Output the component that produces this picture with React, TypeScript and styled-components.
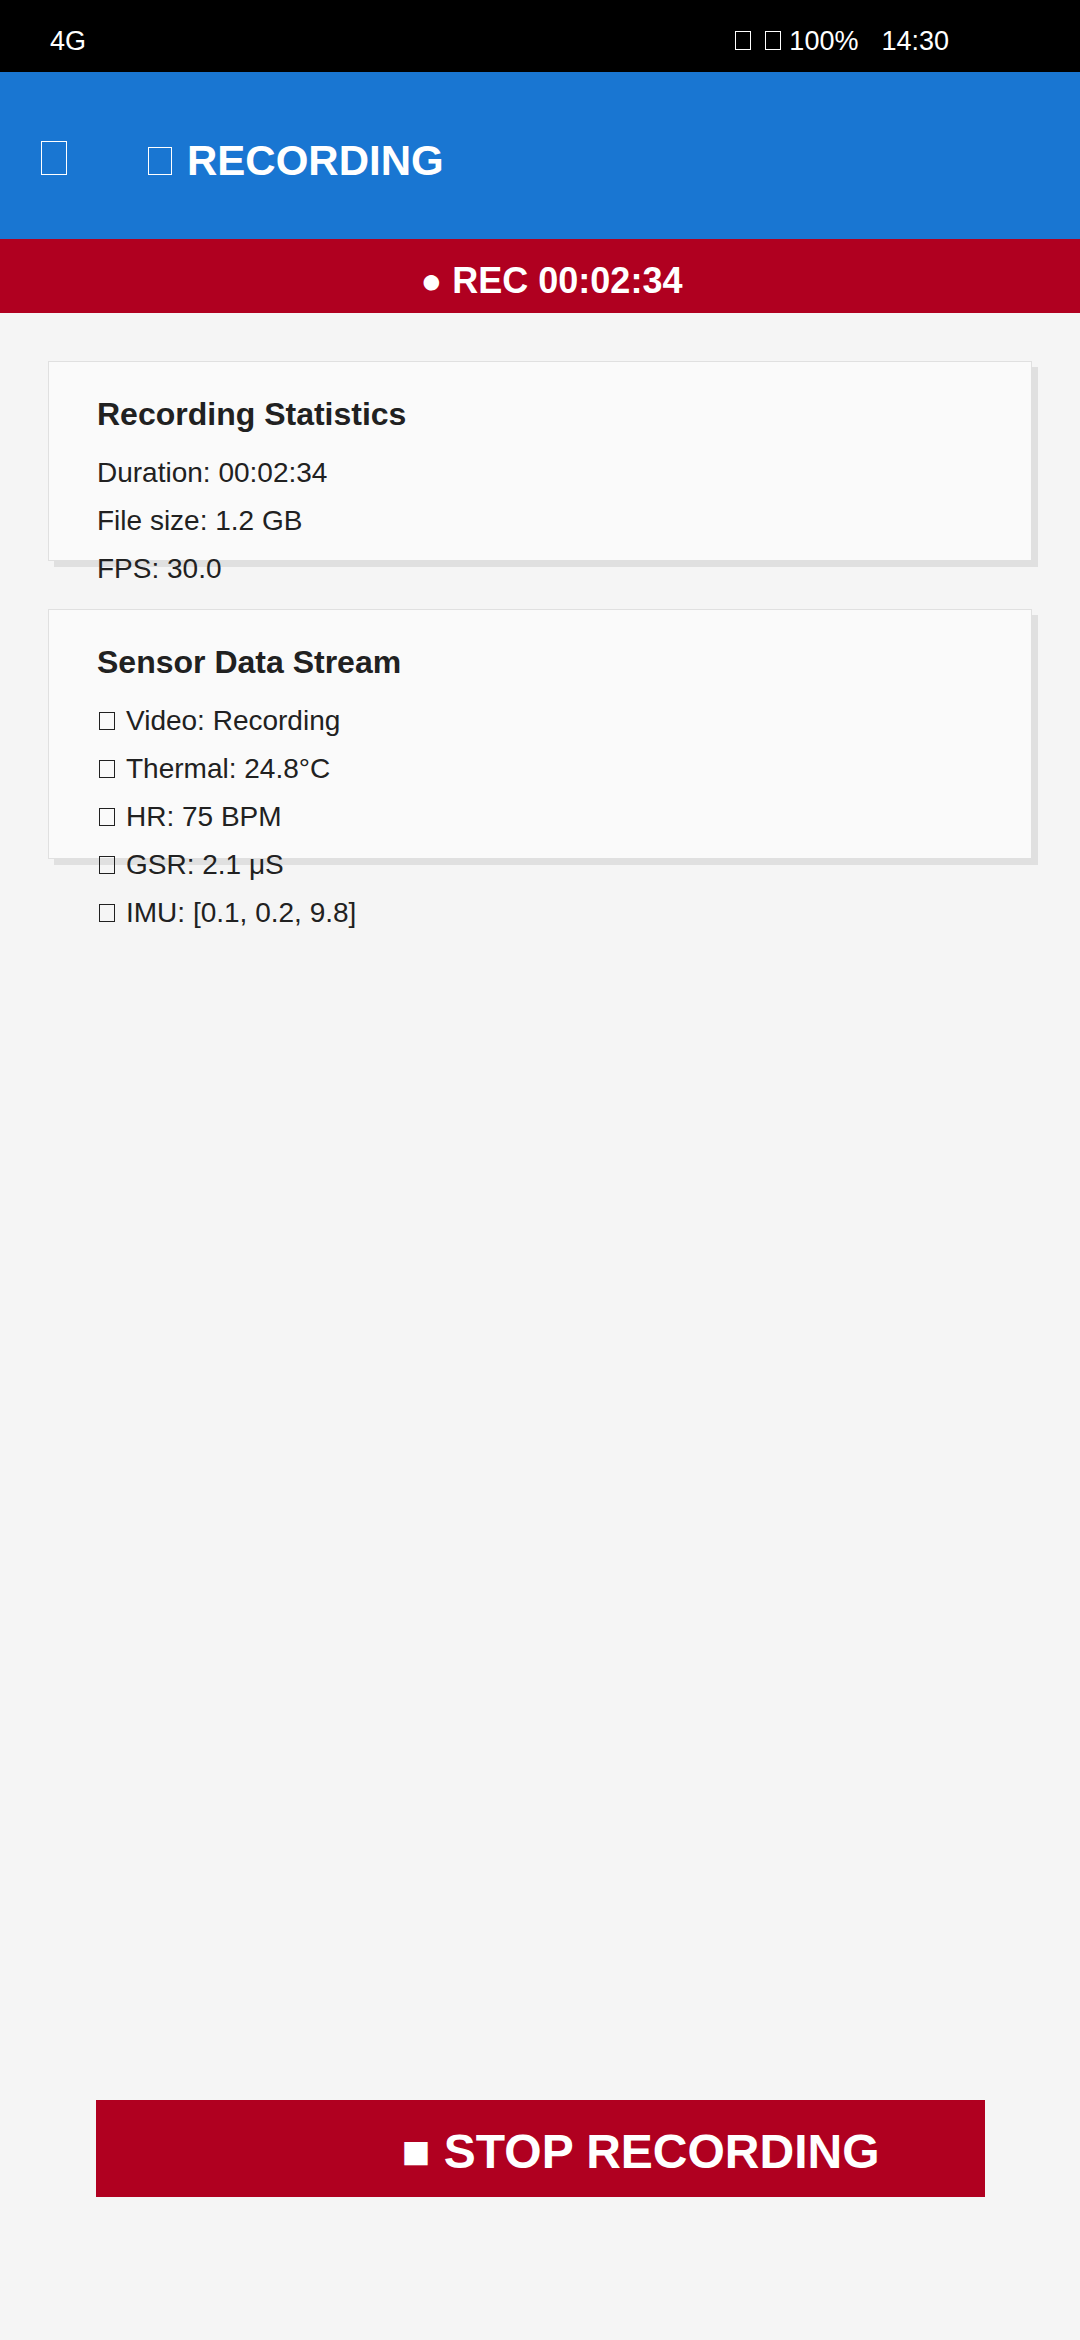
import React from "react";
import styled, { createGlobalStyle } from "styled-components";

const GlobalStyle = createGlobalStyle`
  html, body {
    margin: 0;
    padding: 0;
    background: #f5f5f5;
  }
  body {
    font-family: "Liberation Sans", Arial, sans-serif;
  }
  #root {
    min-height: 100vh;
    display: flex;
    flex-direction: column;
  }
`;

const Screen = styled.div`
  flex: 1;
  display: flex;
  flex-direction: column;
  background: #f5f5f5;
`;

/* Missing-glyph placeholder box, as the reference shows for its icons */
const Glyph = styled.span<{ $w: number; $h: number; $gap: number; $stroke?: number }>`
  display: inline-block;
  box-sizing: border-box;
  width: ${(p) => p.$w}px;
  height: ${(p) => p.$h}px;
  border: ${(p) => p.$stroke ?? 1.5}px solid currentColor;
  margin-right: ${(p) => p.$gap}px;
  vertical-align: baseline;
`;

const StatusBar = styled.div`
  height: 72px;
  box-sizing: border-box;
  background: #000;
  color: #fff;
  font-size: 27px;
  display: flex;
  justify-content: space-between;
  align-items: flex-start;
  padding: 26px 131px 0 50px;
`;

const StatusRight = styled.div`
  display: flex;
  gap: 23px;
`;

const AppBar = styled.header`
  height: 167px;
  box-sizing: border-box;
  background: #1976d2;
  color: #fff;
  display: flex;
  align-items: baseline;
  padding: 65px 0 0 41px;
`;

const NavButton = styled.span`
  width: 107px;
  font-size: 42px;
`;

const Title = styled.h1`
  margin: 0;
  font-size: 42px;
  font-weight: 700;
`;

const RecBar = styled.div`
  height: 74px;
  box-sizing: border-box;
  background: #b00020;
  color: #fff;
  font-size: 36px;
  font-weight: 700;
  text-align: center;
  padding: 21px 0 0 23px;
`;

const Content = styled.main`
  flex: 1;
  display: flex;
  flex-direction: column;
  gap: 48px;
  padding: 48px;
`;

const Card = styled.section<{ $height: number }>`
  height: ${(p) => p.$height}px;
  box-sizing: border-box;
  background: #fafafa;
  border: 1px solid #e0e0e0;
  box-shadow: 6px 6px 0 #e0e0e0;
  padding: 32px 48px;
  color: #212121;
`;

const CardTitle = styled.h2`
  margin: 0 0 15px;
  font-size: 32px;
  line-height: 40px;
  font-weight: 700;
`;

const Row = styled.div`
  font-size: 28px;
  line-height: 48px;
`;

const SensorRow = styled(Row)`
  padding-left: 2px;
`;

const Footer = styled.footer`
  padding: 0 95px 143px 96px;
`;

const StopButton = styled.button`
  display: block;
  width: 100%;
  height: 97px;
  box-sizing: border-box;
  border: none;
  border-radius: 0;
  background: #b00020;
  color: #fff;
  font-family: inherit;
  font-size: 48px;
  font-weight: 700;
  line-height: 55px;
  text-align: center;
  padding: 6px 0 0 200px;
  cursor: pointer;
`;

const stats = ["Duration: 00:02:34", "File size: 1.2 GB", "FPS: 30.0"];
const sensors = [
  "Video: Recording",
  "Thermal: 24.8°C",
  "HR: 75 BPM",
  "GSR: 2.1 μS",
  "IMU: [0.1, 0.2, 9.8]",
];

export default function App() {
  return (
    <>
      <GlobalStyle />
      <Screen>
        <StatusBar>
          <span>4G</span>
          <StatusRight>
            <span>
              <Glyph $w={16} $h={19} $gap={14} $stroke={1} />
              <Glyph $w={16} $h={19} $gap={8} $stroke={1} />
              100%
            </span>
            <span>14:30</span>
          </StatusRight>
        </StatusBar>
        <AppBar>
          <NavButton>
            <Glyph $w={26} $h={34} $gap={0} />
          </NavButton>
          <Title>
            <Glyph $w={24} $h={28} $gap={15} />
            RECORDING
          </Title>
        </AppBar>
        <RecBar>● REC 00:02:34</RecBar>
        <Content>
          <Card $height={200}>
            <CardTitle>Recording Statistics</CardTitle>
            {stats.map((s) => (
              <Row key={s}>{s}</Row>
            ))}
          </Card>
          <Card $height={250}>
            <CardTitle>Sensor Data Stream</CardTitle>
            {sensors.map((s) => (
              <SensorRow key={s}>
                <Glyph $w={16} $h={18} $gap={11} $stroke={1} />
                {s}
              </SensorRow>
            ))}
          </Card>
        </Content>
        <Footer>
          <StopButton>■ STOP RECORDING</StopButton>
        </Footer>
      </Screen>
    </>
  );
}
